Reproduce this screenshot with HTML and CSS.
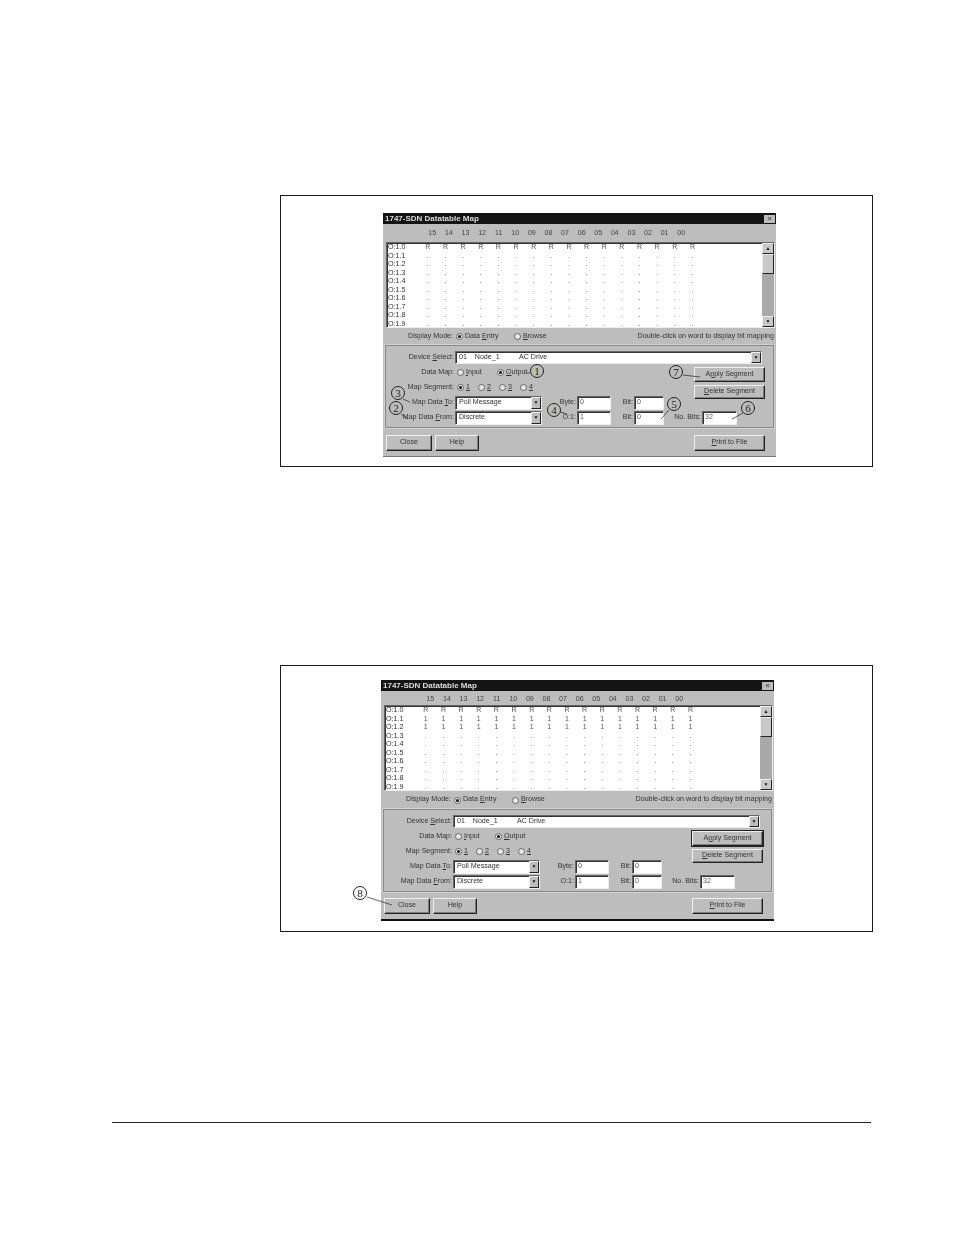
FILE: index.html
```html
<!DOCTYPE html>
<html lang="en">
<head>
<meta charset="utf-8">
<title>1747-SDN Datatable Map</title>
<link rel="stylesheet" href="styles.css">
</head>
<body>
<main class="page">

<section class="figure figure-a">
  <div class="dialog-wrap">
    <div class="dialog">
      <div class="titlebar"><span>1747-SDN Datatable Map</span><span class="xbtn">×</span></div>
      <div class="bit-head"><span>15</span><span>14</span><span>13</span><span>12</span><span>11</span><span>10</span><span>09</span><span>08</span><span>07</span><span>06</span><span>05</span><span>04</span><span>03</span><span>02</span><span>01</span><span>00</span></div>
      <div class="list">
        <div class="rows">
          <div class="row"><b>O:1.0</b><i>R</i><i>R</i><i>R</i><i>R</i><i>R</i><i>R</i><i>R</i><i>R</i><i>R</i><i>R</i><i>R</i><i>R</i><i>R</i><i>R</i><i>R</i><i>R</i></div>
          <div class="row"><b>O:1.1</b><i>.</i><i>.</i><i>.</i><i>.</i><i>.</i><i>.</i><i>.</i><i>.</i><i>.</i><i>.</i><i>.</i><i>.</i><i>.</i><i>.</i><i>.</i><i>.</i></div>
          <div class="row"><b>O:1.2</b><i>.</i><i>.</i><i>.</i><i>.</i><i>.</i><i>.</i><i>.</i><i>.</i><i>.</i><i>.</i><i>.</i><i>.</i><i>.</i><i>.</i><i>.</i><i>.</i></div>
          <div class="row"><b>O:1.3</b><i>.</i><i>.</i><i>.</i><i>.</i><i>.</i><i>.</i><i>.</i><i>.</i><i>.</i><i>.</i><i>.</i><i>.</i><i>.</i><i>.</i><i>.</i><i>.</i></div>
          <div class="row"><b>O:1.4</b><i>.</i><i>.</i><i>.</i><i>.</i><i>.</i><i>.</i><i>.</i><i>.</i><i>.</i><i>.</i><i>.</i><i>.</i><i>.</i><i>.</i><i>.</i><i>.</i></div>
          <div class="row"><b>O:1.5</b><i>.</i><i>.</i><i>.</i><i>.</i><i>.</i><i>.</i><i>.</i><i>.</i><i>.</i><i>.</i><i>.</i><i>.</i><i>.</i><i>.</i><i>.</i><i>.</i></div>
          <div class="row"><b>O:1.6</b><i>.</i><i>.</i><i>.</i><i>.</i><i>.</i><i>.</i><i>.</i><i>.</i><i>.</i><i>.</i><i>.</i><i>.</i><i>.</i><i>.</i><i>.</i><i>.</i></div>
          <div class="row"><b>O:1.7</b><i>.</i><i>.</i><i>.</i><i>.</i><i>.</i><i>.</i><i>.</i><i>.</i><i>.</i><i>.</i><i>.</i><i>.</i><i>.</i><i>.</i><i>.</i><i>.</i></div>
          <div class="row"><b>O:1.8</b><i>.</i><i>.</i><i>.</i><i>.</i><i>.</i><i>.</i><i>.</i><i>.</i><i>.</i><i>.</i><i>.</i><i>.</i><i>.</i><i>.</i><i>.</i><i>.</i></div>
          <div class="row"><b>O:1.9</b><i>.</i><i>.</i><i>.</i><i>.</i><i>.</i><i>.</i><i>.</i><i>.</i><i>.</i><i>.</i><i>.</i><i>.</i><i>.</i><i>.</i><i>.</i><i>.</i></div>
        </div>
        <div class="scroll"><span class="sb-btn">▲</span><span class="sb-thumb"></span><span class="sb-track"></span><span class="sb-btn">▼</span></div>
      </div>
      <div class="mode">
        <span class="lbl">Display Mode:</span>
        <span class="radio on"></span><span class="rt wide"><span>Data <u>E</u>ntry</span></span>
        <span class="radio"></span><span class="rt"><u>B</u>rowse</span>
        <span class="hint">Double-click on word to display bit mapping</span>
      </div>
      <div class="group">
        <div class="g-row g-full"><span class="lbl">Device <u>S</u>elect:</span><span class="select wide-select"><span>01&nbsp;&nbsp;&nbsp; Node_1&nbsp;&nbsp;&nbsp;&nbsp;&nbsp;&nbsp;&nbsp;&nbsp;&nbsp; AC Drive</span><span class="arrow">▼</span></span></div>
        <div class="g-row"><span class="lbl">Data Map:</span><span class="radio"></span><span class="rt wide"><u>I</u>nput</span><span class="radio on"></span><span class="rt"><u>O</u>utput</span></div>
        <div class="g-btns"><span class="btn">A<u>p</u>ply Segment</span><span class="btn btn-short"><u>D</u>elete Segment</span></div>
        <div class="g-row"><span class="lbl">Map Segment:</span><span class="radio on"></span><span class="rt seg"><u>1</u></span><span class="radio"></span><span class="rt seg"><u>2</u></span><span class="radio"></span><span class="rt seg"><u>3</u></span><span class="radio"></span><span class="rt seg"><u>4</u></span></div>
        <div class="g-row"><span class="lbl">Map Data <u>T</u>o:</span><span class="select short-select"><span>Poll Message</span><span class="arrow">▼</span></span><span class="f-lbl f-a">Byte:</span><span class="input in-a">0</span><span class="f-lbl f-b">Bit:</span><span class="input in-b">0</span></div>
        <div class="g-row g-full"><span class="lbl">Map Data <u>F</u>rom:</span><span class="select short-select"><span>Discrete</span><span class="arrow">▼</span></span><span class="f-lbl f-a">O:1:</span><span class="input in-a">1</span><span class="f-lbl f-b">Bit:</span><span class="input in-b">0</span><span class="f-lbl f-c">No. Bits:</span><span class="input in-c">32</span></div>
      </div>
      <div class="footer"><span class="btn b-close">Close</span><span class="btn b-help">Help</span><span class="btn b-print"><u>P</u>rint to File</span></div>
    </div>
    <svg class="leaders" width="393" height="244" viewBox="0 0 393 244" aria-hidden="true">
      <path d="M143 160h4M20 186l7 3M18 201l7 5M177 199l7 2M286 197l-8 9M360 200l-11 6M300 162l17 2"/>
    </svg>
    <span class="callout c1">1</span><span class="callout c2">2</span><span class="callout c3">3</span><span class="callout c4">4</span><span class="callout c5">5</span><span class="callout c6">6</span><span class="callout c7">7</span>
  </div>
</section>

<section class="figure figure-b">
  <div class="dialog-wrap">
    <div class="dialog dialog-b">
      <div class="titlebar"><span>1747-SDN Datatable Map</span><span class="xbtn">×</span></div>
      <div class="bit-head"><span>15</span><span>14</span><span>13</span><span>12</span><span>11</span><span>10</span><span>09</span><span>08</span><span>07</span><span>06</span><span>05</span><span>04</span><span>03</span><span>02</span><span>01</span><span>00</span></div>
      <div class="list">
        <div class="rows">
          <div class="row"><b>O:1.0</b><i>R</i><i>R</i><i>R</i><i>R</i><i>R</i><i>R</i><i>R</i><i>R</i><i>R</i><i>R</i><i>R</i><i>R</i><i>R</i><i>R</i><i>R</i><i>R</i></div>
          <div class="row"><b>O:1.1</b><i>1</i><i>1</i><i>1</i><i>1</i><i>1</i><i>1</i><i>1</i><i>1</i><i>1</i><i>1</i><i>1</i><i>1</i><i>1</i><i>1</i><i>1</i><i>1</i></div>
          <div class="row"><b>O:1.2</b><i>1</i><i>1</i><i>1</i><i>1</i><i>1</i><i>1</i><i>1</i><i>1</i><i>1</i><i>1</i><i>1</i><i>1</i><i>1</i><i>1</i><i>1</i><i>1</i></div>
          <div class="row"><b>O:1.3</b><i>.</i><i>.</i><i>.</i><i>.</i><i>.</i><i>.</i><i>.</i><i>.</i><i>.</i><i>.</i><i>.</i><i>.</i><i>.</i><i>.</i><i>.</i><i>.</i></div>
          <div class="row"><b>O:1.4</b><i>.</i><i>.</i><i>.</i><i>.</i><i>.</i><i>.</i><i>.</i><i>.</i><i>.</i><i>.</i><i>.</i><i>.</i><i>.</i><i>.</i><i>.</i><i>.</i></div>
          <div class="row"><b>O:1.5</b><i>.</i><i>.</i><i>.</i><i>.</i><i>.</i><i>.</i><i>.</i><i>.</i><i>.</i><i>.</i><i>.</i><i>.</i><i>.</i><i>.</i><i>.</i><i>.</i></div>
          <div class="row"><b>O:1.6</b><i>.</i><i>.</i><i>.</i><i>.</i><i>.</i><i>.</i><i>.</i><i>.</i><i>.</i><i>.</i><i>.</i><i>.</i><i>.</i><i>.</i><i>.</i><i>.</i></div>
          <div class="row"><b>O:1.7</b><i>.</i><i>.</i><i>.</i><i>.</i><i>.</i><i>.</i><i>.</i><i>.</i><i>.</i><i>.</i><i>.</i><i>.</i><i>.</i><i>.</i><i>.</i><i>.</i></div>
          <div class="row"><b>O:1.8</b><i>.</i><i>.</i><i>.</i><i>.</i><i>.</i><i>.</i><i>.</i><i>.</i><i>.</i><i>.</i><i>.</i><i>.</i><i>.</i><i>.</i><i>.</i><i>.</i></div>
          <div class="row"><b>O:1.9</b><i>.</i><i>.</i><i>.</i><i>.</i><i>.</i><i>.</i><i>.</i><i>.</i><i>.</i><i>.</i><i>.</i><i>.</i><i>.</i><i>.</i><i>.</i><i>.</i></div>
        </div>
        <div class="scroll"><span class="sb-btn">▲</span><span class="sb-thumb"></span><span class="sb-track"></span><span class="sb-btn">▼</span></div>
      </div>
      <div class="mode">
        <span class="lbl">Display Mode:</span>
        <span class="radio on"></span><span class="rt wide"><span>Data <u>E</u>ntry</span></span>
        <span class="radio"></span><span class="rt"><u>B</u>rowse</span>
        <span class="hint">Double-click on word to display bit mapping</span>
      </div>
      <div class="group">
        <div class="g-row g-full"><span class="lbl">Device <u>S</u>elect:</span><span class="select wide-select"><span>01&nbsp;&nbsp;&nbsp; Node_1&nbsp;&nbsp;&nbsp;&nbsp;&nbsp;&nbsp;&nbsp;&nbsp;&nbsp; AC Drive</span><span class="arrow">▼</span></span></div>
        <div class="g-row"><span class="lbl">Data Map:</span><span class="radio"></span><span class="rt wide"><u>I</u>nput</span><span class="radio on"></span><span class="rt"><u>O</u>utput</span></div>
        <div class="g-btns"><span class="btn btn-default">A<u>p</u>ply Segment</span><span class="btn btn-short"><u>D</u>elete Segment</span></div>
        <div class="g-row"><span class="lbl">Map Segment:</span><span class="radio on"></span><span class="rt seg"><u>1</u></span><span class="radio"></span><span class="rt seg"><u>2</u></span><span class="radio"></span><span class="rt seg"><u>3</u></span><span class="radio"></span><span class="rt seg"><u>4</u></span></div>
        <div class="g-row"><span class="lbl">Map Data <u>T</u>o:</span><span class="select short-select"><span>Poll Message</span><span class="arrow">▼</span></span><span class="f-lbl f-a">Byte:</span><span class="input in-a">0</span><span class="f-lbl f-b">Bit:</span><span class="input in-b">0</span></div>
        <div class="g-row g-full"><span class="lbl">Map Data <u>F</u>rom:</span><span class="select short-select"><span>Discrete</span><span class="arrow">▼</span></span><span class="f-lbl f-a">O:1:</span><span class="input in-a">1</span><span class="f-lbl f-b">Bit:</span><span class="input in-b">0</span><span class="f-lbl f-c">No. Bits:</span><span class="input in-c">32</span></div>
      </div>
      <div class="footer"><span class="btn b-close">Close</span><span class="btn b-help">Help</span><span class="btn b-print"><u>P</u>rint to File</span></div>
    </div>
    <svg class="leaders leaders-b" width="60" height="30" viewBox="0 0 60 30" aria-hidden="true">
      <path d="M13 5l25 8"/>
    </svg>
    <span class="callout c8">8</span>
  </div>
</section>

<hr class="rule">
</main>
</body>
</html>
```

FILE: styles.css
```css
* { box-sizing: border-box; }
html, body { margin: 0; padding: 0; background: #fff; }
.page { width: 954px; height: 1235px; padding-top: 195px; overflow: hidden; }

.figure { margin-left: 280px; width: 593px; border: 1.5px solid #1a1a1a; }
.figure-a { height: 272px; padding: 17px 0 0 102px; }
.figure-b { height: 267px; margin-top: 198px; padding: 14px 0 0 100px; }

.dialog-wrap { position: relative; width: 393px; }

.dialog {
  width: 393px; height: 244px; background: #bdbdbd; color: #333;
  font: 7.1px/1 "Liberation Sans", Arial, sans-serif;
  display: flex; flex-direction: column;
  filter: blur(0.6px);
  border-bottom: 1px solid #777;
}
.dialog-b { height: 241px; border-bottom: 2px solid #111; }

.titlebar {
  height: 11px; background: #141414; color: #ddd; font-weight: bold; font-size: 8px;
  display: flex; align-items: center; justify-content: space-between; padding: 0 1px 0 2px; flex: none;
}
.xbtn { width: 11px; height: 8px; background: #bdbdbd; color: #555; font-size: 8px; line-height: 8px; text-align: center; }

.bit-head { height: 18px; flex: none; display: grid; grid-template-columns: repeat(16, 16.6px); padding: 6px 0 0 41px; color: #444; }
.dialog-b .bit-head { height: 14px; padding-top: 5px; }
.bit-head span { text-align: center; }

.list {
  height: 86px; flex: none; margin: 0 1px 0 3px; background: #fff; display: flex; justify-content: space-between;
  border: 1px solid; border-color: #666 #eee #eee #666; box-shadow: inset 1px 1px 0 #333;
}
.rows { padding: 0 0 0 1px; }
.row { display: grid; grid-template-columns: 31px repeat(16, 17.65px); height: 8.5px; line-height: 8.5px; color: #555; }
.row b { font-weight: normal; font-size: 7.2px; color: #333; }
.row i { font-style: normal; text-align: center; color: #555; font-size: 7px; }

.scroll { width: 12px; flex: none; display: flex; flex-direction: column; background: #a9a9a9; }
.sb-btn { height: 11px; background: #c8c8c8; border: 1px solid; border-color: #eee #222 #222 #eee; color: #111; font-size: 5px; line-height: 9px; text-align: center; flex: none; }
.sb-thumb { height: 20px; background: #c8c8c8; border: 1px solid; border-color: #eee #222 #222 #eee; flex: none; }
.sb-track { flex: 1; }

.lbl { width: 69px; text-align: right; flex: none; padding-right: 1px; white-space: nowrap; }
.mode { height: 17px; flex: none; display: flex; align-items: center; padding-left: 2px; padding-right: 2px; white-space: nowrap; }
.dialog-b .mode { height: 18px; }
.hint { margin-left: auto; }

.radio { width: 7px; height: 7px; border-radius: 50%; background: #e8e8e8; border: 1px solid #666; flex: none; margin: 0 2px 0 2px; position: relative; }
.radio.on::after { content: ""; position: absolute; left: 1px; top: 1px; width: 3px; height: 3px; border-radius: 50%; background: #111; }
.rt { flex: none; width: 27px; white-space: nowrap; }
.rt.wide { width: 29px; }
.mode .rt.wide { width: 47px; }
.rt.seg { width: 10px; }

.group {
  height: 83px; margin: 0 2px; flex: none; border: 1px solid #888; box-shadow: 0 0 0 0.5px #e4e4e4;
  padding-top: 4px; display: grid; grid-template-columns: 308px 71px; grid-template-rows: 15px 15px 15px 15px 15px; grid-auto-flow: row;
}
.g-row { display: flex; align-items: center; white-space: nowrap; }
.g-full { grid-column: 1 / 3; }

.g-btns { grid-column: 2; grid-row: 2 / span 3; display: flex; flex-direction: column; gap: 3px; padding-top: 2px; }
.btn {
  height: 15px; background: #bdbdbd; border: 1px solid; border-color: #f0f0f0 #222 #222 #f0f0f0;
  box-shadow: inset -1px -1px 0 #7c7c7c; display: flex; align-items: center; justify-content: center; flex: none;
}
.btn-short { height: 14px; }
.btn-default { outline: 1px solid #222; }

.select {
  height: 13px; background: #fff; border: 1px solid; border-color: #666 #eee #eee #666; box-shadow: inset 1px 1px 0 #333;
  display: flex; align-items: center; justify-content: space-between; padding-left: 3px; flex: none;
}
.wide-select { width: 307px; }
.short-select { width: 87px; height: 14px; }
.arrow { width: 10px; height: 100%; background: #bdbdbd; border: 1px solid; border-color: #eee #222 #222 #eee; font-size: 5px; line-height: 9px; color: #111; text-align: center; flex: none; }

.input { height: 14px; background: #fff; border: 1px solid; border-color: #666 #eee #eee #666; box-shadow: inset 1px 1px 0 #333; padding: 2px 0 0 2px; flex: none; color: #555; }
.f-lbl { flex: none; text-align: right; padding-right: 1px; }
.f-a { width: 35px; }
.f-b { width: 23px; }
.f-c { width: 38px; }
.in-a { width: 34px; }
.in-b { width: 30px; }
.in-c { width: 35px; }

.footer { flex: 1; display: flex; align-items: flex-start; padding: 7px 0 0 3px; }
.dialog-b .footer { padding-top: 6px; }
.b-close { width: 46px; height: 16px; }
.b-help { width: 44px; height: 16px; margin-left: 3px; }
.b-print { width: 71px; height: 16px; margin-left: 215px; }

.leaders { position: absolute; left: 0; top: 0; fill: none; stroke: #222; stroke-width: 0.7; }
.leaders-b { left: -27px; top: 212px; }

.callout {
  position: absolute; width: 14px; height: 14px; border: 1px solid #222; border-radius: 50%; background: transparent;
  font: 11px/12px "Liberation Serif", serif; text-align: center; color: #222;
}
.c1 { left: 147px; top: 151px; }
.c2 { left: 6px; top: 188px; }
.c3 { left: 8px; top: 173px; }
.c4 { left: 164px; top: 190px; }
.c5 { left: 284px; top: 184px; }
.c6 { left: 358px; top: 188px; }
.c7 { left: 286px; top: 152px; }
.c8 { left: -28px; top: 206px; }

.rule { margin: 190px 0 0 112px; width: 759px; height: 1px; border: 0; background: #222; }
```
